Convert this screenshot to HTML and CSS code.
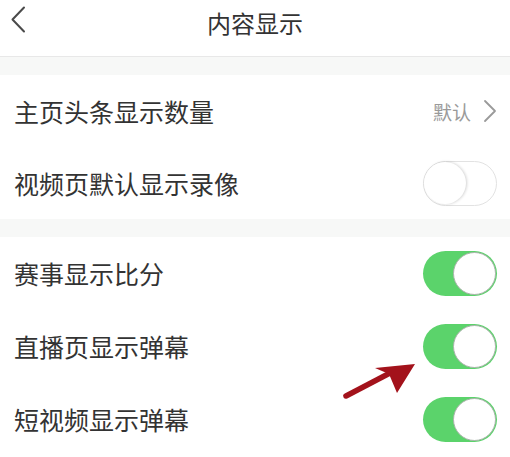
FILE: index.html
```html
<!DOCTYPE html>
<html lang="zh-CN">
<head>
<meta charset="utf-8">
<title>内容显示</title>
<link rel="stylesheet" href="styles.css">
</head>
<body>
<div class="page">
  <header class="topbar">
    <span class="back">
      <svg width="20" height="30" viewBox="0 0 20 30"><path d="M15 2.5 L3.5 14.5 L15 26.5" fill="none" stroke="#4a4a4a" stroke-width="2" stroke-linecap="round" stroke-linejoin="round"/></svg>
    </span>
    <h1 class="title">内容显示</h1>
  </header>
  <div class="gap"></div>
  <section class="group g1">
    <div class="row">
      <span class="label">主页头条显示数量</span>
      <span class="value">默认
        <svg class="chev" width="14" height="24" viewBox="0 0 14 24"><path d="M2 2 L12 12 L2 22" fill="none" stroke="#9a9a9a" stroke-width="1.8" stroke-linecap="round" stroke-linejoin="round"/></svg>
      </span>
    </div>
    <div class="row">
      <span class="label">视频页默认显示录像</span>
      <span class="switch off"><span class="knob"></span></span>
    </div>
  </section>
  <div class="gap"></div>
  <section class="group g2">
    <div class="row">
      <span class="label">赛事显示比分</span>
      <span class="switch on"><span class="knob"></span></span>
    </div>
    <div class="row">
      <span class="label">直播页显示弹幕</span>
      <span class="switch on"><span class="knob"></span></span>
    </div>
    <div class="row">
      <span class="label">短视频显示弹幕</span>
      <span class="switch on"><span class="knob"></span></span>
    </div>
  </section>
  <svg class="arrow" width="80" height="45" viewBox="0 0 80 45">
    <path d="M6 40 L50 17" stroke="#a3121b" stroke-width="5.5" stroke-linecap="round" fill="none"/>
    <path d="M75 8 L35 12 L49 18 L57 37 Z" fill="#a3121b"/>
  </svg>
</div>
</body>
</html>
```
FILE: styles.css
```css
* { box-sizing: border-box; }
html, body { margin: 0; padding: 0; background: #fff; }
body {
  font-family: "Noto Sans CJK SC", "Noto Sans", sans-serif;
  color: #333;
  width: 510px;
  height: 457px;
  overflow: hidden;
}
.page { position: relative; width: 510px; height: 457px; }
.topbar {
  height: 57px;
  display: flex;
  align-items: flex-start;
  justify-content: center;
  padding-top: 11px;
  position: relative;
  border-bottom: 1px solid #e8e8e8;
  background: #fff;
}
.back {
  position: absolute;
  left: 9px;
  top: 5px;
  display: flex;
}
.title {
  margin: 0;
  font-size: 24px;
  font-weight: 400;
  color: #333;
  line-height: 1;
}
.gap { height: 18px; background: #f7f8f7; }
.group { display: flex; flex-direction: column; background: #fff; }
.row {
  display: flex;
  align-items: center;
  justify-content: space-between;
  padding: 0 13px 0 14px;
}
.g1 .row { height: 72px; }
.g2 .row { height: 73px; }
.label { font-size: 25px; line-height: 1; color: #333; }
.value {
  display: flex;
  align-items: center;
  gap: 12px;
  font-size: 19px;
  color: #9a9a9a;
}
.switch {
  width: 74px;
  height: 45px;
  border-radius: 23px;
  display: flex;
  align-items: center;
  flex-shrink: 0;
}
.switch .knob {
  width: 43px;
  height: 43px;
  border-radius: 50%;
  background: #fff;
}
.switch.on {
  background: #5bd36b;
  justify-content: flex-end;
  padding: 1px;
}
.switch.on .knob { border: 1px solid #a9b3aa; }
.switch.off {
  background: #fff;
  border: 1.5px solid #e2e2e2;
  justify-content: flex-start;
}
.switch.off .knob {
  width: 42px;
  height: 42px;
  box-shadow: 1px 0 3px rgba(0,0,0,0.18);
}
.arrow {
  position: absolute;
  left: 340px;
  top: 356px;
}
```
